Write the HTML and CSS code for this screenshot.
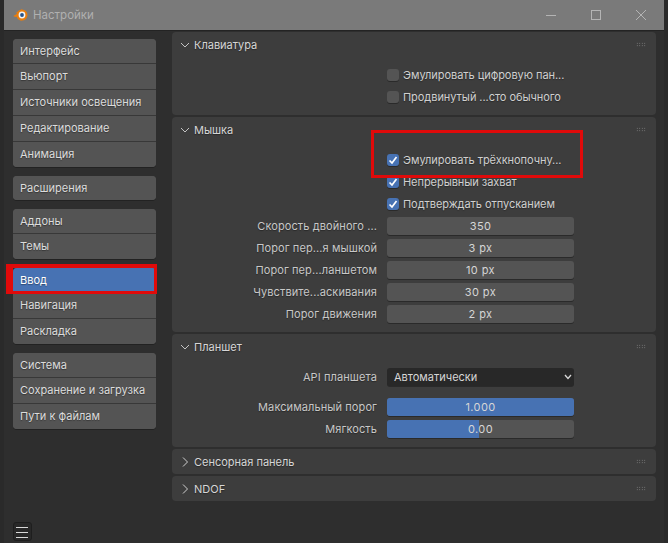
FILE: index.html
```html
<!DOCTYPE html>
<html>

<head>
  <meta charset="UTF-8">
  <title>Настройки</title>
  <link rel="stylesheet" href="styles.css">
</head>

<body>
  <div class="window">
    <div class="titlebar">
      <svg class="logo" width="16" height="14" viewBox="0 0 16 14">
        <path d="M0.3 8 L4.6 5.4 L3 4.2 L7.5 3 L8 1.6 L9 1.5 L9 12.5 C6.5 12.5 4.6 11.2 4 9 L1.6 8.8 Z" fill="#e87d0d"/>
        <circle cx="9" cy="7" r="5.5" fill="#e87d0d"/>
        <circle cx="9" cy="7" r="3.4" fill="#f4f4f4"/>
        <circle cx="9" cy="7" r="1.9" fill="#26538a"/>
      </svg>
      <span class="title">Настройки</span>
      <div class="window-buttons">
        <svg width="12" height="12" viewBox="0 0 12 12"><path d="M1 6.5 H11" stroke="#b4b4b4" fill="none"/></svg>
        <svg width="12" height="12" viewBox="0 0 12 12"><rect x="1.5" y="1.5" width="9" height="9" stroke="#b4b4b4" fill="none"/></svg>
        <svg width="12" height="12" viewBox="0 0 12 12"><path d="M1 1 L11 11 M11 1 L1 11" stroke="#b4b4b4" fill="none"/></svg>
      </div>
    </div>

    <div class="body">
      <!-- Coluna com categorias -->
      <div class="sidebar">
        <div class="nav-group">
          <div class="nav-item">Интерфейс</div>
          <div class="nav-item">Вьюпорт</div>
          <div class="nav-item">Источники освещения</div>
          <div class="nav-item">Редактирование</div>
          <div class="nav-item">Анимация</div>
        </div>
        <div class="nav-group">
          <div class="nav-item">Расширения</div>
        </div>
        <div class="nav-group">
          <div class="nav-item">Аддоны</div>
          <div class="nav-item">Темы</div>
        </div>
        <div class="nav-group">
          <div class="nav-item active">Ввод</div>
          <div class="nav-item">Навигация</div>
          <div class="nav-item">Раскладка</div>
        </div>
        <div class="nav-group">
          <div class="nav-item">Система</div>
          <div class="nav-item">Сохранение и загрузка</div>
          <div class="nav-item">Пути к файлам</div>
        </div>
        <div class="menu-button">
          <svg width="13" height="13" viewBox="0 0 13 13"><path d="M0 2.5 H12 M0 7.5 H12 M0 12.5 H12" stroke="#d8d8d8" fill="none"/></svg>
        </div>
      </div>

      <!-- Coluna com paineis -->
      <div class="content">
        <div class="panel panel-keyboard">
          <div class="panel-header">
            <svg class="chevron" width="10" height="10" viewBox="0 0 10 10"><path d="M1 3 L5 7 L9 3" stroke="#c4c4c4" fill="none"/></svg>
            <span>Клавиатура</span>
            <span class="grip"></span>
          </div>
          <div class="rows">
            <div class="row"><span class="label"></span><span class="checkbox"></span><span class="check-label">Эмулировать цифровую пан...</span></div>
            <div class="row"><span class="label"></span><span class="checkbox"></span><span class="check-label">Продвинутый ...сто обычного</span></div>
          </div>
        </div>

        <div class="panel panel-mouse">
          <div class="panel-header">
            <svg class="chevron" width="10" height="10" viewBox="0 0 10 10"><path d="M1 3 L5 7 L9 3" stroke="#c4c4c4" fill="none"/></svg>
            <span>Мышка</span>
            <span class="grip"></span>
          </div>
          <div class="rows">
            <div class="row"><span class="label"></span><span class="checkbox checked"><svg width="12" height="12" viewBox="0 0 12 12"><path d="M2.5 6.5 L5 9 L9.5 3" stroke="#fff" stroke-width="1.7" fill="none"/></svg></span><span class="check-label">Эмулировать трёхкнопочну...</span></div>
            <div class="row"><span class="label"></span><span class="checkbox checked"><svg width="12" height="12" viewBox="0 0 12 12"><path d="M2.5 6.5 L5 9 L9.5 3" stroke="#fff" stroke-width="1.7" fill="none"/></svg></span><span class="check-label">Непрерывный захват</span></div>
            <div class="row"><span class="label"></span><span class="checkbox checked"><svg width="12" height="12" viewBox="0 0 12 12"><path d="M2.5 6.5 L5 9 L9.5 3" stroke="#fff" stroke-width="1.7" fill="none"/></svg></span><span class="check-label">Подтверждать отпусканием</span></div>
            <div class="row"><span class="label">Скорость двойного ...</span><span class="field">350</span></div>
            <div class="row"><span class="label">Порог пер...я мышкой</span><span class="field">3 px</span></div>
            <div class="row"><span class="label">Порог пер...ланшетом</span><span class="field">10 px</span></div>
            <div class="row"><span class="label">Чувствите...аскивания</span><span class="field">30 px</span></div>
            <div class="row"><span class="label">Порог движения</span><span class="field">2 px</span></div>
          </div>
        </div>

        <div class="panel panel-tablet">
          <div class="panel-header">
            <svg class="chevron" width="10" height="10" viewBox="0 0 10 10"><path d="M1 3 L5 7 L9 3" stroke="#c4c4c4" fill="none"/></svg>
            <span>Планшет</span>
            <span class="grip"></span>
          </div>
          <div class="rows">
            <div class="row row-select"><span class="label">API планшета</span>
              <span class="field select">Автоматически
                <svg width="8" height="6" viewBox="0 0 8 6"><path d="M1 1 L4 4.5 L7 1" stroke="#d8d8d8" stroke-width="1.3" fill="none"/></svg>
              </span>
            </div>
            <div class="row"><span class="label">Максимальный порог</span><span class="field slider"><span class="slider-fill full"></span><span class="slider-value">1.000</span></span></div>
            <div class="row"><span class="label">Мягкость</span><span class="field slider"><span class="slider-fill half"></span><span class="slider-value">0.00</span></span></div>
          </div>
        </div>

        <div class="panel panel-closed">
          <div class="panel-header">
            <svg class="chevron" width="10" height="10" viewBox="0 0 10 10"><path d="M3 0.5 L7.5 5 L3 9.5" stroke="#d0d0d0" fill="none"/></svg>
            <span>Сенсорная панель</span>
            <span class="grip"></span>
          </div>
        </div>

        <div class="panel panel-closed">
          <div class="panel-header">
            <svg class="chevron" width="10" height="10" viewBox="0 0 10 10"><path d="M3 0.5 L7.5 5 L3 9.5" stroke="#d0d0d0" fill="none"/></svg>
            <span>NDOF</span>
            <span class="grip"></span>
          </div>
        </div>
      </div>
    </div>
  </div>

  <!-- Marcacoes vermelhas sobre o screenshot -->
  <div class="mark mark-nav"></div>
  <div class="mark mark-check"></div>
</body>

</html>
```

FILE: styles.css
```css
html,
body {
  margin: 0;
  padding: 0;
  height: 100%;
  overflow: hidden;
}

body {
  position: relative;
  background-color: #2a2a2a;
  font-family: "Inter", "Noto Sans", sans-serif;
  font-size: 11px;
  color: #d6d6d6;
}

.window {
  margin-left: 4px;
  width: 660px;
  height: 543px;
  display: flex;
  flex-direction: column;
  background-color: #2e2e2e;
}

.titlebar {
  height: 30px;
  flex: none;
  display: flex;
  align-items: center;
  padding-left: 9px;
  background-color: #7a7a7a;
}

.logo {
  margin-right: 4px;
}

.title {
  font-size: 11.5px;
  color: #b0b0b0;
}

.window-buttons {
  margin-left: auto;
  margin-right: 17px;
  display: flex;
  gap: 33px;
}

.body {
  flex: 1;
  display: flex;
  border-top: 1px solid #232323;
}

.sidebar {
  width: 143px;
  margin-left: 9px;
  padding-top: 8px;
  padding-bottom: 2px;
  display: flex;
  flex-direction: column;
  gap: 9px;
}

.nav-group {
  border-radius: 4px;
  overflow: hidden;
  background-color: #545454;
  box-shadow: 0 1px 0 #222;
}

.nav-item {
  height: 25px;
  line-height: 24px;
  padding-left: 7px;
  background-color: #545454;
  color: #dcdcdc;
  border-top: 1px solid #383838;
  text-shadow: 0 1px 1px rgba(0, 0, 0, 0.35);
}

.nav-item:first-child {
  height: 24px;
  border-top: none;
}

.nav-item.active {
  background-color: #4772b3;
  color: #fff;
}

.menu-button {
  width: 17px;
  height: 17px;
  margin-top: auto;
  display: flex;
  align-items: center;
  justify-content: center;
  border: 1px solid #1e1e1e;
  border-radius: 3px;
  background-color: #282828;
}

.content {
  flex: 1;
  margin-left: 16px;
  margin-right: 8px;
  padding-top: 1px;
  display: flex;
  flex-direction: column;
  gap: 2px;
}

.panel {
  border-radius: 4px;
  background-color: #3d3d3d;
}

.panel-header {
  height: 25px;
  display: flex;
  align-items: center;
  padding-left: 8px;
  gap: 4px;
  color: #d6d6d6;
  text-shadow: 0 1px 1px rgba(0, 0, 0, 0.35);
}

.chevron {
  flex: none;
}

.grip {
  width: 10px;
  height: 5px;
  margin-left: auto;
  margin-right: 10px;
  background-image: radial-gradient(#8a8a8a 0.6px, transparent 0.8px);
  background-size: 2.5px 2.5px;
}

.panel-keyboard {
  height: 83px;
}

.panel-mouse {
  height: 215px;
}

.panel-tablet {
  height: 113px;
}

.panel-closed {
  height: 25px;
}

.rows {
  display: flex;
  flex-direction: column;
  gap: 4px;
  padding-top: 9px;
}

.row {
  height: 18px;
  display: flex;
  align-items: center;
}

.row-select {
  margin-bottom: 8px;
}

.label {
  width: 215px;
  flex: none;
  text-align: right;
  padding-right: 10px;
  box-sizing: border-box;
  color: #c8c8c8;
  letter-spacing: 0.1px;
  text-shadow: 0 1px 1px rgba(0, 0, 0, 0.35);
}

.checkbox {
  width: 12px;
  height: 12px;
  flex: none;
  display: flex;
  border-radius: 3px;
  background-color: #545454;
  box-shadow: 0 1px 0 #2a2a2a;
}

.checkbox.checked {
  background-color: #4772b3;
}

.check-label {
  margin-left: 4px;
  color: #d0d0d0;
  letter-spacing: -0.05px;
  text-shadow: 0 1px 1px rgba(0, 0, 0, 0.35);
}

.field {
  width: 187px;
  height: 18px;
  flex: none;
  display: flex;
  align-items: center;
  justify-content: center;
  border-radius: 3px;
  background-color: #545454;
  color: #d6d6d6;
  letter-spacing: 0.4px;
  box-shadow: 0 1px 0 #2a2a2a;
}

.field.select {
  justify-content: space-between;
  padding: 0 2px 0 7px;
  box-sizing: border-box;
  background-color: #282828;
  letter-spacing: 0;
}

.slider {
  position: relative;
  overflow: hidden;
}

.slider-fill {
  position: absolute;
  left: 0;
  top: 0;
  bottom: 0;
  background-color: #4772b3;
}

.slider-fill.full {
  width: 100%;
}

.slider-fill.half {
  width: 49%;
}

.slider-value {
  position: relative;
}

.mark {
  position: absolute;
  border: 3px solid #e00a0a;
  box-sizing: border-box;
}

.mark-nav {
  left: 6px;
  top: 264px;
  width: 151px;
  height: 30px;
  border-width: 4px 3px 3px 7px;
}

.mark-check {
  left: 371px;
  top: 130px;
  width: 212px;
  height: 48px;
}
```
